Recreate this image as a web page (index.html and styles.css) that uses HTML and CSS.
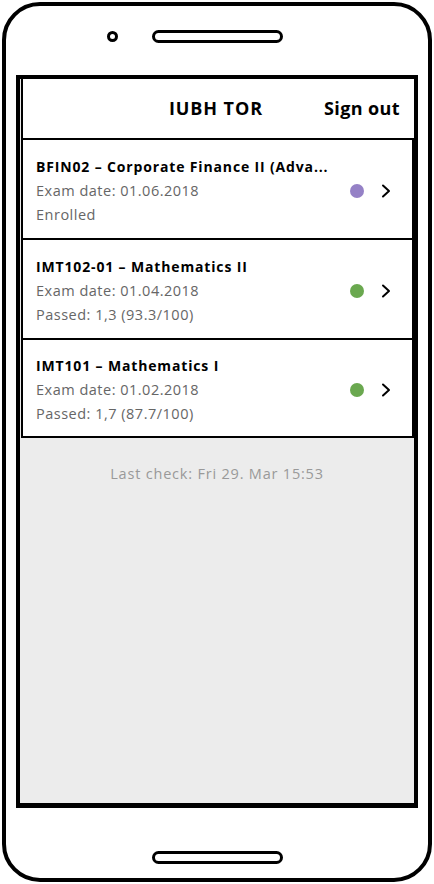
FILE: index.html
```html
<!DOCTYPE html>
<html>
<head>
<meta charset="utf-8">
<link rel="stylesheet" href="styles.css">
</head>
<body>
<div class="phone">
  <div class="top">
    <span class="camera"></span>
    <span class="speaker"></span>
  </div>
  <div class="screen">
    <div class="header">
      <span class="title">IUBH TOR</span>
      <span class="signout">Sign out</span>
    </div>
    <div class="card">
      <div class="info">
        <div class="name">BFIN02 – Corporate Finance II (Adva...</div>
        <div class="sub">Exam date: 01.06.2018</div>
        <div class="sub">Enrolled</div>
      </div>
      <span class="dot purple"></span>
      <svg class="chev" width="10" height="14" viewBox="0 0 10 14"><path d="M2 1.5 L8 7 L2 12.5" fill="none" stroke="#000" stroke-width="2" stroke-linecap="round" stroke-linejoin="round"/></svg>
    </div>
    <div class="card">
      <div class="info">
        <div class="name">IMT102-01 – Mathematics II</div>
        <div class="sub">Exam date: 01.04.2018</div>
        <div class="sub">Passed: 1,3 (93.3/100)</div>
      </div>
      <span class="dot green"></span>
      <svg class="chev" width="10" height="14" viewBox="0 0 10 14"><path d="M2 1.5 L8 7 L2 12.5" fill="none" stroke="#000" stroke-width="2" stroke-linecap="round" stroke-linejoin="round"/></svg>
    </div>
    <div class="card last">
      <div class="info">
        <div class="name">IMT101 – Mathematics I</div>
        <div class="sub">Exam date: 01.02.2018</div>
        <div class="sub">Passed: 1,7 (87.7/100)</div>
      </div>
      <span class="dot green"></span>
      <svg class="chev" width="10" height="14" viewBox="0 0 10 14"><path d="M2 1.5 L8 7 L2 12.5" fill="none" stroke="#000" stroke-width="2" stroke-linecap="round" stroke-linejoin="round"/></svg>
    </div>
    <div class="rest">
      <div class="lastcheck">Last check: Fri 29. Mar 15:53</div>
    </div>
  </div>
  <div class="bottom">
    <span class="speaker"></span>
  </div>
</div>
</body>
</html>
```
FILE: styles.css
```css
* { box-sizing: border-box; }
html, body { margin: 0; padding: 0; background: #fff; }
body {
  font-family: "Open Sans", "Noto Sans", sans-serif;
  color: #000;
  width: 434px;
  height: 884px;
  overflow: hidden;
}
.phone {
  margin: 2px;
  width: 430px;
  height: 880px;
  border: 4px solid #000;
  border-radius: 38px;
  display: flex;
  flex-direction: column;
  background: #fff;
}
.top {
  height: 69px;
  display: flex;
  align-items: center;
  padding-left: 101px;
  padding-bottom: 36px;
}
.camera {
  width: 11px;
  height: 11px;
  border: 3px solid #000;
  border-radius: 50%;
  margin-top: 28px;
}
.speaker {
  display: block;
  width: 131px;
  height: 13px;
  border: 3px solid #000;
  border-radius: 7px;
}
.top .speaker { margin-left: 34px; margin-top: 28px; }
.screen {
  margin: 0 10px;
  flex: 0 0 733px;
  border: 4px solid #000;
  border-bottom-width: 5px;
  display: flex;
  flex-direction: column;
  background: #ececec;
}
.header {
  height: 61px;
  margin-left: 1px;
  background: #fff;
  border-left: 2px solid #000;
  border-bottom: 2px solid #000;
  display: flex;
  align-items: center;
  justify-content: flex-end;
  padding-right: 14px;
  padding-bottom: 1px;
}
.title {
  font-size: 18px;
  font-weight: 700;
  margin-right: 61px;
  letter-spacing: 0.9px;
}
.signout {
  font-size: 18px;
  font-weight: 700;
  letter-spacing: 0.4px;
}
.card {
  height: 100px;
  margin-left: 1px;
  background: #fff;
  border-left: 2px solid #000;
  border-right: 2px solid #000;
  border-bottom: 2px solid #000;
  display: flex;
  align-items: center;
  padding: 4px 21px 0 13px;
}
.card.last { height: 98px; }
.info { flex: 1; min-width: 0; }
.name {
  font-size: 14px;
  font-weight: 700;
  line-height: 24px;
  white-space: nowrap;
  letter-spacing: 0.85px;
}
.sub {
  font-size: 14.5px;
  line-height: 24px;
  color: #666;
  white-space: nowrap;
  letter-spacing: 0.5px;
}
.dot {
  width: 14px;
  height: 14px;
  border-radius: 50%;
  flex: none;
  margin-right: 17px;
}
.purple { background: #9581c6; }
.green { background: #6aa84f; }
.chev { flex: none; display: block; }
.rest {
  flex: 1;
  padding-top: 26px;
}
.lastcheck {
  text-align: center;
  font-size: 14.5px;
  color: #999;
  line-height: 20px;
  letter-spacing: 0.8px;
}
.bottom {
  flex: 1;
  display: flex;
  justify-content: center;
  align-items: flex-start;
  padding-top: 43px;
}
```
